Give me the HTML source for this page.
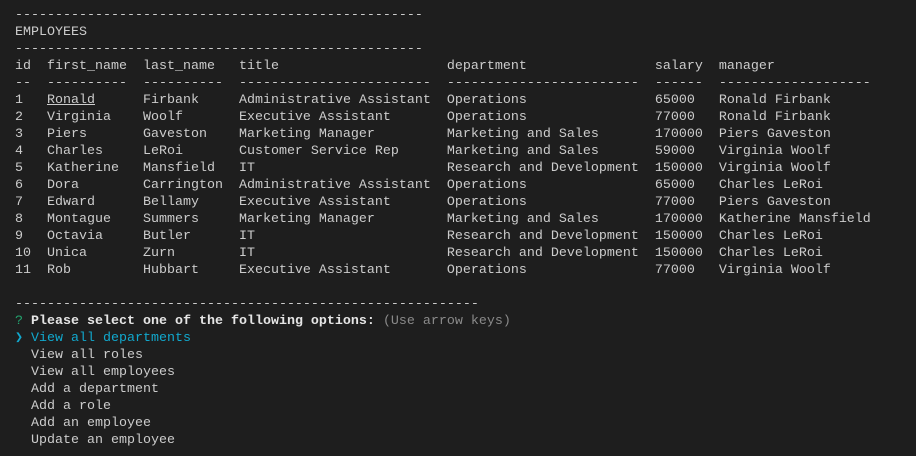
<!DOCTYPE html>
<html><head><style>
html,body{margin:0;padding:0;background:#1e1e1e;width:916px;height:456px;overflow:hidden}
pre{margin:0;position:absolute;left:15px;top:7px;font-family:"Liberation Mono",monospace;font-size:13.33px;line-height:17px;color:#cccccc;letter-spacing:0}
.g{color:#23a36e}.b{font-weight:bold;color:#e5e5e5}.d{color:#8a8a8a}.c{color:#11a8cd}
u{text-decoration:underline}
</style></head><body><pre>---------------------------------------------------
EMPLOYEES
---------------------------------------------------
id  first_name  last_name   title                     department                salary  manager
--  ----------  ----------  ------------------------  ------------------------  ------  -------------------
1   <u>Ronald</u>      Firbank     Administrative Assistant  Operations                65000   Ronald Firbank
2   Virginia    Woolf       Executive Assistant       Operations                77000   Ronald Firbank
3   Piers       Gaveston    Marketing Manager         Marketing and Sales       170000  Piers Gaveston
4   Charles     LeRoi       Customer Service Rep      Marketing and Sales       59000   Virginia Woolf
5   Katherine   Mansfield   IT                        Research and Development  150000  Virginia Woolf
6   Dora        Carrington  Administrative Assistant  Operations                65000   Charles LeRoi
7   Edward      Bellamy     Executive Assistant       Operations                77000   Piers Gaveston
8   Montague    Summers     Marketing Manager         Marketing and Sales       170000  Katherine Mansfield
9   Octavia     Butler      IT                        Research and Development  150000  Charles LeRoi
10  Unica       Zurn        IT                        Research and Development  150000  Charles LeRoi
11  Rob         Hubbart     Executive Assistant       Operations                77000   Virginia Woolf

----------------------------------------------------------
<span class="g">?</span> <span class="b">Please select one of the following options:</span> <span class="d">(Use arrow keys)</span>
<span class="c">❯ View all departments</span>
  View all roles
  View all employees
  Add a department
  Add a role
  Add an employee
  Update an employee</pre></body></html>
